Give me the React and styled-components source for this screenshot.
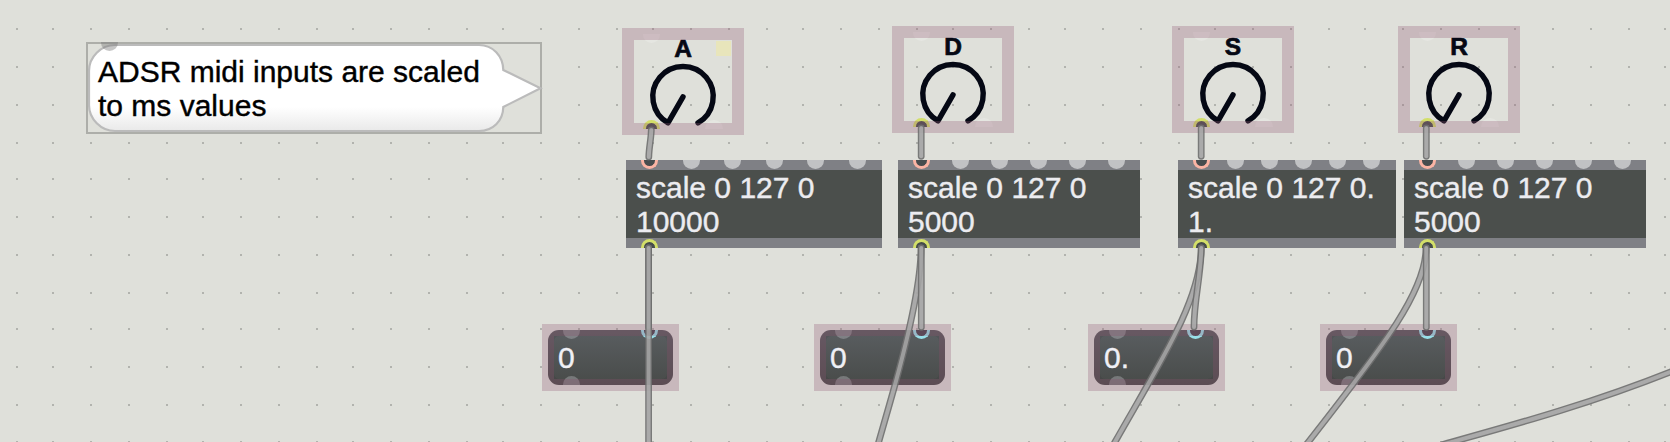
import React from "react";
import styled, { createGlobalStyle, css } from "styled-components";

const GlobalStyle = createGlobalStyle`
  html, body { margin: 0; padding: 0; overflow: hidden; background: #dfe0da; }
  * { box-sizing: border-box; }
`;

const Patcher = styled.main`
  position: relative;
  width: 1670px;
  height: 442px;
  overflow: hidden;
  background: #dfe0da;
  font: 30px/34px "Liberation Sans", Arial, sans-serif;
  -webkit-text-stroke: 0.4px currentColor;
`;

const Layer = styled.svg`
  position: absolute;
  inset: 0;
  display: block;
  pointer-events: none;
`;

/* Every object sits at a free position on the patcher canvas. */
const PatchObject = styled.section`
  position: absolute;
  left: ${(p) => p.$x}px;
  top: ${(p) => p.$y}px;
  width: ${(p) => p.$w}px;
  height: ${(p) => p.$h}px;
`;

const portTones = {
  idle: css`background: #c1c2c4;`,
  hot: css`background: #474c4e; border-color: #fbb4a4;`,
  signal: css`background: #454b4b; border-color: #d3df69;`,
  cold: css`background: #44404a; border-color: #98dfe9;`,
  ghost: css`background: rgba(255, 255, 255, 0.2);`,
  soft: css`background: rgba(180, 180, 186, 0.42);`,
  shade: css`background: rgba(120, 120, 120, 0.42);`,
};

const ringed = ["hot", "signal", "cold"];

const Port = styled.i`
  display: block;
  flex: none;
  width: 17.4px;
  height: 8.7px;
  border: 0 solid transparent;
  border-radius: ${(p) =>
    p.$side === "out" ? "8.7px 8.7px 0 0" : "0 0 8.7px 8.7px"};
  ${(p) => portTones[p.$tone]}
  ${(p) =>
    ringed.includes(p.$tone) &&
    css`border-width: ${p.$side === "out" ? "3px 3px 0" : "0 3px 3px"};`}
`;

const PortRow = styled.div`
  position: absolute;
  left: 0;
  right: 0;
  display: flex;
  justify-content: space-between;
  padding: 0 ${(p) => p.$end}px 0 ${(p) => p.$start}px;
  ${(p) => (p.$side === "out" ? css`bottom: 0;` : css`top: 0;`)}
`;

const ControlFrame = styled.div`
  position: absolute;
  inset: -6px;
  border: 12px solid rgba(150, 93, 118, 0.3);
  pointer-events: none;
`;

const CommentObject = styled(PatchObject)`
  border: 2px solid #adaea9;
`;

const CommentText = styled.p`
  position: relative;
  margin: 0;
  padding: 11px 0 0 10px;
  color: #000;
  white-space: pre;
`;

const CommentInlet = styled(Port)`
  margin-top: -2px;
`;

const BubbleArt = styled.svg`
  position: absolute;
  left: 0;
  top: 0;
  overflow: visible;
`;

const DialObject = styled(PatchObject)`
  display: flex;
  flex-direction: column;
  align-items: center;
`;

const DialLabel = styled.span`
  flex: none;
  height: 32px;
  font-size: 24.5px;
  line-height: 29px;
  font-weight: 700;
  color: #050814;
  -webkit-text-stroke: 0.7px currentColor;
`;

const DialFace = styled.svg`
  display: block;
  flex: none;
  width: 70px;
  height: 63px;
  overflow: visible;
`;

const Tag = styled.i`
  position: absolute;
  top: 7px;
  right: 7px;
  width: 15px;
  height: 15px;
  background: #e8e5bb;
`;

const CodeObject = styled(PatchObject)`
  display: flex;
  flex-direction: column;
  background: #4b4f4c;
  border: solid #7f8085;
  border-width: 10px 0;
  color: #ececf0;
`;

const CodeText = styled.div`
  padding: 1px 0 0 10px;
  white-space: pre;
`;

const CodePorts = styled(PortRow)`
  ${(p) => (p.$side === "out" ? css`bottom: -9.5px;` : css`top: -10px;`)}
`;

const NumberObject = styled(PatchObject)`
  display: flex;
  align-items: center;
  padding: 0 0 0 10px;
  border-radius: 11px;
  background: linear-gradient(#5a5e61, #484b49);
  box-shadow: inset 0 0 0 6px rgba(50, 35, 45, 0.13);
  color: #f0f0f5;
`;

const gridX = [
  16, 52, 90, 128, 166, 202, 240, 278, 316, 352, 390, 428, 466, 502, 540, 578,
  616, 652, 690, 728, 766, 802, 840, 878, 916, 952, 990, 1028, 1064, 1102,
  1140, 1178, 1214, 1252, 1290, 1328, 1364, 1402, 1440, 1478, 1514, 1552,
  1590, 1628, 1664,
];
const gridY = [28, 66, 104, 142, 178, 216, 254, 292, 328, 366, 404, 441];

const dials = [
  { label: "A", x: 628, y: 34, tagged: true },
  { label: "D", x: 898, y: 32 },
  { label: "S", x: 1178, y: 32 },
  { label: "R", x: 1404, y: 32 },
];

const scalers = [
  { text: "scale 0 127 0\n10000", x: 626, w: 256, end: 16 },
  { text: "scale 0 127 0\n5000", x: 898, w: 242, end: 15 },
  { text: "scale 0 127 0.\n1.", x: 1178, w: 218, end: 15.5 },
  { text: "scale 0 127 0\n5000", x: 1404, w: 242, end: 15 },
];

const numbers = [
  { value: "0", x: 548 },
  { value: "0", x: 820 },
  { value: "0.", x: 1094 },
  { value: "0", x: 1326 },
];

const cords = [
  "M651.3 130 C651 140 649 147 648.8 157",
  "M921.2 128 V156.3",
  "M1201.2 128 V156.3",
  "M1426.3 128 V156.3",
  "M648.6 248 V327",
  "M648.6 248 V450",
  "M921 248 C921 290 900.8 365 889.3 405 L876.4 450",
  "M921.3 248 V327.3",
  "M1201.2 248 C1201 300 1160.3 362 1115 442 L1110 451",
  "M1201.3 248 C1201 275 1194 300 1194 327",
  "M1426 248 C1426 290 1386.8 342 1308.3 442 L1302 450",
  "M1426.3 248 V327.3",
  "M1442 444.7 C1502 428 1592 404 1680 368",
];

function Grid() {
  return (
    <Layer width="1670" height="442" aria-hidden="true">
      {gridY.map((y) =>
        gridX.map((x) => (
          <rect key={`${x}-${y}`} x={x} y={y} width="2" height="2" fill="#b2b3ae" />
        ))
      )}
    </Layer>
  );
}

function Comment() {
  return (
    <CommentObject $x={86} $y={42} $w={456} $h={92}>
      <BubbleArt width="452" height="88" aria-hidden="true">
        <defs>
          <linearGradient id="bubble" x1="0" y1="0" x2="0" y2="1">
            <stop offset="0.72" stopColor="#fff" />
            <stop offset="1" stopColor="#e9e9e9" />
          </linearGradient>
        </defs>
        <path
          d="M27 1 H391 C405 1 415 12 415.3 26 L452.5 44.3 L415.3 63 C415 77 405 87 391 87 H27 C13 87 1 75 1 61 V27 C1 13 13 1 27 1 Z"
          fill="url(#bubble)"
          stroke="#bbbbbb"
          strokeWidth="2.2"
        />
      </BubbleArt>
      <PortRow $start={13} $end={0}>
        <CommentInlet $tone="shade" />
      </PortRow>
      <CommentText>{"ADSR midi inputs are scaled\nto ms values"}</CommentText>
    </CommentObject>
  );
}

function Dial({ label, x, y, tagged }) {
  return (
    <DialObject $x={x} $y={y} $w={110} $h={95}>
      <PortRow $start={15} $end={0}>
        <Port $tone="ghost" />
      </PortRow>
      {tagged && <Tag />}
      <DialLabel>{label}</DialLabel>
      <DialFace viewBox="0 0 70 63" aria-hidden="true">
        <path
          d="M20 56.9 A30.2 30.2 0 1 1 50 56.9 M35 30.8 L20 56.9"
          fill="none"
          stroke="#050814"
          strokeWidth="5.4"
          strokeLinecap="round"
          strokeLinejoin="round"
        />
      </DialFace>
      <PortRow $side="out" $start={15} $end={15.3}>
        <Port $side="out" $tone="signal" />
        <Port $side="out" $tone="ghost" />
      </PortRow>
      <ControlFrame />
    </DialObject>
  );
}

function Scaler({ text, x, w, end }) {
  return (
    <CodeObject $x={x} $y={160} $w={w} $h={88}>
      <CodePorts $start={15} $end={end}>
        {["hot", "idle", "idle", "idle", "idle", "idle"].map((tone, i) => (
          <Port key={i} $tone={tone} />
        ))}
      </CodePorts>
      <CodeText>{text}</CodeText>
      <CodePorts $side="out" $start={15} $end={0}>
        <Port $side="out" $tone="signal" />
      </CodePorts>
    </CodeObject>
  );
}

function NumberBox({ value, x }) {
  return (
    <NumberObject $x={x} $y={330} $w={125} $h={55}>
      <PortRow $start={15} $end={15}>
        <Port $tone="soft" />
        <Port $tone="cold" />
      </PortRow>
      <span>{value}</span>
      <PortRow $side="out" $start={15} $end={0}>
        <Port $side="out" $tone="soft" />
      </PortRow>
      <ControlFrame />
    </NumberObject>
  );
}

function Cords() {
  return (
    <Layer width="1670" height="442" aria-hidden="true">
      {cords.map((d) => (
        <g key={d} fill="none" strokeLinecap="round" opacity="0.9">
          <path d={d} stroke="#6f6f6f" strokeWidth="6.8" />
          <path d={d} stroke="#a5a5a5" strokeWidth="4" />
        </g>
      ))}
    </Layer>
  );
}

export default function App() {
  return (
    <>
      <GlobalStyle />
      <Patcher>
        <Grid />
        <Comment />
        {dials.map((d) => (
          <Dial key={d.label} {...d} />
        ))}
        {scalers.map((s) => (
          <Scaler key={s.x} {...s} />
        ))}
        {numbers.map((n) => (
          <NumberBox key={n.x} {...n} />
        ))}
        <Cords />
      </Patcher>
    </>
  );
}
